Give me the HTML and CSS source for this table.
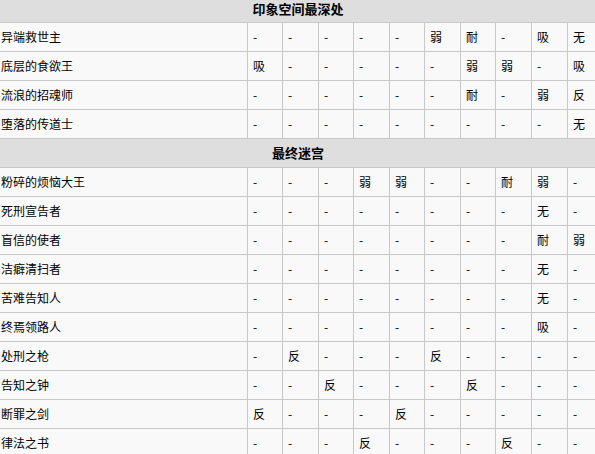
FILE: index.html
```html
<!DOCTYPE html>
<html lang="zh-CN">
<head>
<meta charset="utf-8">
<title>抗性表</title>
<link rel="stylesheet" href="styles.css">
</head>
<body>
<div class="table">
  <div class="row section"><div class="cell head first">印象空间最深处</div></div>
  <div class="row"><div class="cell name">异端救世主</div><div class="cell">-</div><div class="cell">-</div><div class="cell">-</div><div class="cell">-</div><div class="cell">-</div><div class="cell">弱</div><div class="cell">耐</div><div class="cell">-</div><div class="cell">吸</div><div class="cell">无</div></div>
  <div class="row"><div class="cell name">底层的食欲王</div><div class="cell">吸</div><div class="cell">-</div><div class="cell">-</div><div class="cell">-</div><div class="cell">-</div><div class="cell">-</div><div class="cell">弱</div><div class="cell">弱</div><div class="cell">-</div><div class="cell">吸</div></div>
  <div class="row"><div class="cell name">流浪的招魂师</div><div class="cell">-</div><div class="cell">-</div><div class="cell">-</div><div class="cell">-</div><div class="cell">-</div><div class="cell">-</div><div class="cell">耐</div><div class="cell">-</div><div class="cell">弱</div><div class="cell">反</div></div>
  <div class="row"><div class="cell name">堕落的传道士</div><div class="cell">-</div><div class="cell">-</div><div class="cell">-</div><div class="cell">-</div><div class="cell">-</div><div class="cell">-</div><div class="cell">-</div><div class="cell">-</div><div class="cell">-</div><div class="cell">无</div></div>
  <div class="row section"><div class="cell head">最终迷宫</div></div>
  <div class="row"><div class="cell name">粉碎的烦恼大王</div><div class="cell">-</div><div class="cell">-</div><div class="cell">-</div><div class="cell">弱</div><div class="cell">弱</div><div class="cell">-</div><div class="cell">-</div><div class="cell">耐</div><div class="cell">弱</div><div class="cell">-</div></div>
  <div class="row"><div class="cell name">死刑宣告者</div><div class="cell">-</div><div class="cell">-</div><div class="cell">-</div><div class="cell">-</div><div class="cell">-</div><div class="cell">-</div><div class="cell">-</div><div class="cell">-</div><div class="cell">无</div><div class="cell">-</div></div>
  <div class="row"><div class="cell name">盲信的使者</div><div class="cell">-</div><div class="cell">-</div><div class="cell">-</div><div class="cell">-</div><div class="cell">-</div><div class="cell">-</div><div class="cell">-</div><div class="cell">-</div><div class="cell">耐</div><div class="cell">弱</div></div>
  <div class="row"><div class="cell name">洁癖清扫者</div><div class="cell">-</div><div class="cell">-</div><div class="cell">-</div><div class="cell">-</div><div class="cell">-</div><div class="cell">-</div><div class="cell">-</div><div class="cell">-</div><div class="cell">无</div><div class="cell">-</div></div>
  <div class="row"><div class="cell name">苦难告知人</div><div class="cell">-</div><div class="cell">-</div><div class="cell">-</div><div class="cell">-</div><div class="cell">-</div><div class="cell">-</div><div class="cell">-</div><div class="cell">-</div><div class="cell">无</div><div class="cell">-</div></div>
  <div class="row"><div class="cell name">终焉领路人</div><div class="cell">-</div><div class="cell">-</div><div class="cell">-</div><div class="cell">-</div><div class="cell">-</div><div class="cell">-</div><div class="cell">-</div><div class="cell">-</div><div class="cell">吸</div><div class="cell">-</div></div>
  <div class="row"><div class="cell name">处刑之枪</div><div class="cell">-</div><div class="cell">反</div><div class="cell">-</div><div class="cell">-</div><div class="cell">-</div><div class="cell">反</div><div class="cell">-</div><div class="cell">-</div><div class="cell">-</div><div class="cell">-</div></div>
  <div class="row"><div class="cell name">告知之钟</div><div class="cell">-</div><div class="cell">-</div><div class="cell">反</div><div class="cell">-</div><div class="cell">-</div><div class="cell">-</div><div class="cell">反</div><div class="cell">-</div><div class="cell">-</div><div class="cell">-</div></div>
  <div class="row"><div class="cell name">断罪之剑</div><div class="cell">反</div><div class="cell">-</div><div class="cell">-</div><div class="cell">-</div><div class="cell">反</div><div class="cell">-</div><div class="cell">-</div><div class="cell">-</div><div class="cell">-</div><div class="cell">-</div></div>
  <div class="row"><div class="cell name">律法之书</div><div class="cell">-</div><div class="cell">-</div><div class="cell">-</div><div class="cell">反</div><div class="cell">-</div><div class="cell">-</div><div class="cell">-</div><div class="cell">反</div><div class="cell">-</div><div class="cell">-</div></div>
</div>
</body>
</html>
```

FILE: styles.css
```css
html, body {
  margin: 0;
  padding: 0;
  overflow: hidden;
  background: #ffffff;
}

body {
  font-family: "Noto Sans CJK SC", "Noto Sans", sans-serif;
  font-size: 12px;
  color: #000000;
}

.table {
  width: 603px;
}

.row {
  display: grid;
  grid-template-columns: 248px 35px 36px 35px 36px 35px 36px 35px 36px 36px 35px;
}

.row.section {
  grid-template-columns: 1fr;
}

.cell {
  box-sizing: border-box;
  height: 29px;
  line-height: 28px;
  padding-left: 5px;
  background: #f9f9f9;
  border-right: 1px solid #c8c8c8;
  border-bottom: 1px solid #c8c8c8;
  white-space: nowrap;
  overflow: hidden;
}

.cell.name {
  padding-left: 1px;
}

.cell.head {
  background: #dedede;
  text-align: center;
  font-weight: bold;
  font-size: 13px;
  padding-left: 0;
  padding-right: 6px;
}

.cell.head.first {
  height: 23px;
  line-height: 18px;
}
```
